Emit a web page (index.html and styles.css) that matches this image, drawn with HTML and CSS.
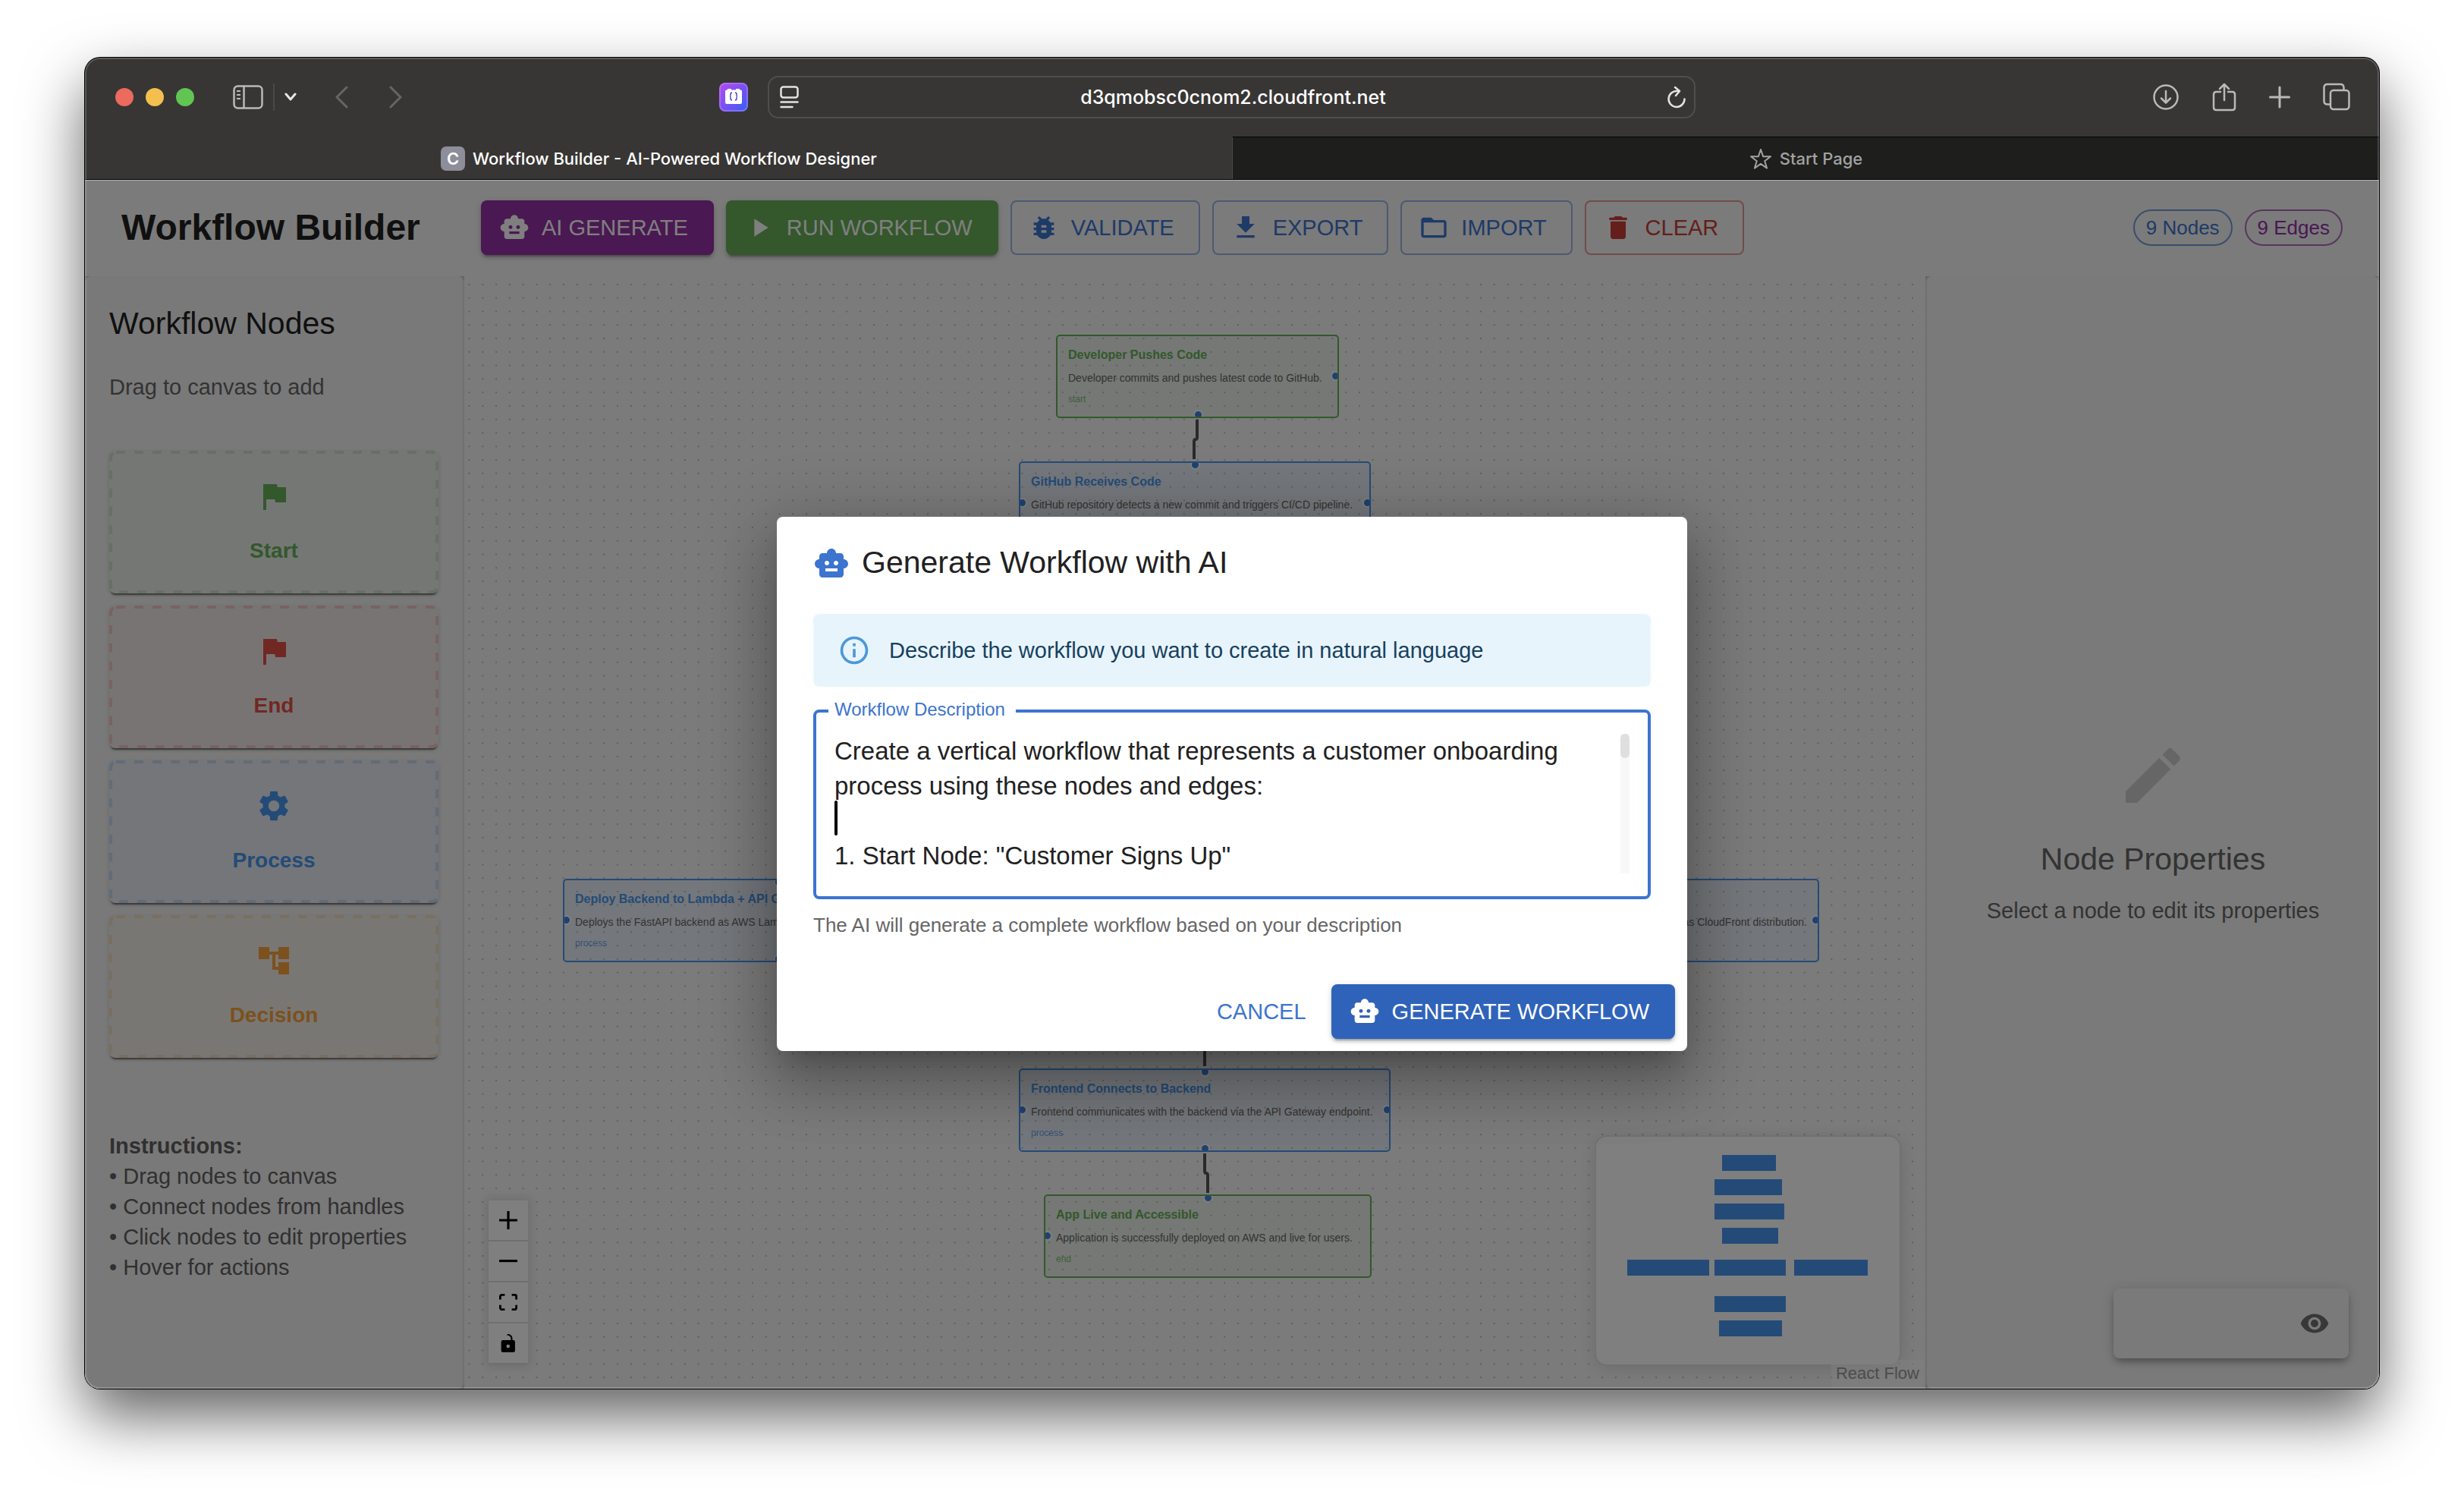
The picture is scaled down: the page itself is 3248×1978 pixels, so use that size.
FILE: index.html
```html
<!DOCTYPE html>
<html lang="en">
<head>
<meta charset="utf-8">
<title>Workflow Builder - AI-Powered Workflow Designer</title>
<link rel="stylesheet" href="styles.css">
</head>
<body>
<svg class="sprite" aria-hidden="true">
  <symbol id="i-robot" viewBox="0 0 24 24"><path d="M20 9V7c0-1.100-.9-2-2-2h-3c0-1.660-1.340-3-3-3S9 3.340 9 5H6c-1.100 0-2 .9-2 2v2c-1.660 0-3 1.340-3 3s1.340 3 3 3v4c0 1.100.9 2 2 2h12c1.100 0 2-.9 2-2v-4c1.660 0 3-1.340 3-3s-1.340-3-3-3zM7.500 11.500c0-.83.67-1.500 1.500-1.500s1.500.67 1.500 1.500S9.830 13 9 13s-1.500-.67-1.500-1.500zM16 17H8v-2h8v2zm-1-4c-.83 0-1.500-.67-1.500-1.500S14.170 10 15 10s1.500.67 1.500 1.500S15.830 13 15 13z"/></symbol>
  <symbol id="i-play" viewBox="0 0 24 24"><path d="M8 5v14l11-7z"/></symbol>
  <symbol id="i-bug" viewBox="0 0 24 24"><path d="M20 8h-2.810c-.45-.78-1.070-1.450-1.820-1.960L17 4.410 15.590 3l-2.170 2.170C12.960 5.060 12.490 5 12 5s-.96.06-1.410.17L8.410 3 7 4.410l1.620 1.630C7.880 6.550 7.260 7.220 6.810 8H4v2h2.090c-.05.33-.09.66-.09 1v1H4v2h2v1c0 .34.04.67.09 1H4v2h2.810c1.040 1.790 2.970 3 5.190 3s4.150-1.210 5.190-3H20v-2h-2.090c.05-.33.09-.66.09-1v-1h2v-2h-2v-1c0-.34-.04-.67-.09-1H20V8zm-6 8h-4v-2h4v2zm0-4h-4v-2h4v2z"/></symbol>
  <symbol id="i-export" viewBox="0 0 24 24"><path d="M19 9h-4V3H9v6H5l7 7 7-7zM5 18v2h14v-2H5z"/></symbol>
  <symbol id="i-folder" viewBox="0 0 24 24"><path d="M20 6h-8l-2-2H4c-1.100 0-1.990.9-1.990 2L2 18c0 1.100.9 2 2 2h16c1.100 0 2-.9 2-2V8c0-1.100-.9-2-2-2zm0 12H4V8h16v10z"/></symbol>
  <symbol id="i-trash" viewBox="0 0 24 24"><path d="M6 19c0 1.100.9 2 2 2h8c1.100 0 2-.9 2-2V7H6v12zM19 4h-3.500l-1-1h-5l-1 1H5v2h14V4z"/></symbol>
  <symbol id="i-flag" viewBox="0 0 24 24"><path d="M14.400 6 14 4H5v17h2v-7h5.600l.4 2h7V6z"/></symbol>
  <symbol id="i-gear" viewBox="0 0 24 24"><path d="M19.140 12.940c.04-.3.06-.61.06-.94 0-.32-.02-.64-.07-.94l2.030-1.580c.18-.14.23-.41.12-.61l-1.920-3.320c-.12-.22-.37-.29-.59-.22l-2.390.96c-.5-.38-1.030-.7-1.620-.94l-.36-2.540c-.04-.24-.24-.41-.48-.41h-3.840c-.24 0-.43.17-.47.41l-.36 2.540c-.59.24-1.130.57-1.620.94l-2.390-.96c-.22-.08-.47 0-.59.22L2.740 8.870c-.12.21-.08.47.12.61l2.030 1.580c-.05.3-.09.63-.09.94s.02.64.07.94l-2.030 1.580c-.18.14-.23.41-.12.61l1.920 3.320c.12.22.37.29.59.22l2.390-.96c.5.38 1.030.7 1.620.94l.36 2.540c.05.24.24.41.48.41h3.840c.24 0 .44-.17.47-.41l.36-2.540c.59-.24 1.130-.56 1.620-.94l2.390.96c.22.08.47 0 .59-.22l1.920-3.320c.12-.22.07-.47-.12-.61l-2.010-1.580zM12 15.600c-1.980 0-3.600-1.620-3.600-3.600s1.620-3.600 3.600-3.600 3.600 1.620 3.600 3.600-1.620 3.600-3.600 3.600z"/></symbol>
  <symbol id="i-tree" viewBox="0 0 24 24"><path d="M22 11V3h-7v3H9V3H2v8h7V8h2v10h4v3h7v-8h-7v3h-2V8h2v3z"/></symbol>
  <symbol id="i-edit" viewBox="0 0 24 24"><path d="M3 17.250V21h3.750L17.810 9.940l-3.750-3.750L3 17.250zM20.710 7.040c.39-.39.39-1.020 0-1.410l-2.340-2.340a.996.996 0 0 0-1.410 0l-1.830 1.830 3.750 3.750 1.830-1.830z"/></symbol>
  <symbol id="i-eye" viewBox="0 0 24 24"><path d="M12 4.500C7 4.500 2.730 7.610 1 12c1.730 4.390 6 7.500 11 7.500s9.270-3.110 11-7.500c-1.730-4.390-6-7.500-11-7.500zM12 17c-2.760 0-5-2.240-5-5s2.240-5 5-5 5 2.240 5 5-2.240 5-5 5zm0-8c-1.660 0-3 1.340-3 3s1.340 3 3 3 3-1.340 3-3-1.340-3-3-3z"/></symbol>
  <symbol id="i-info" viewBox="0 0 24 24"><path d="M11 9h2V7h-2v2zM12 20c-4.410 0-8-3.590-8-8s3.590-8 8-8 8 3.590 8 8-3.590 8-8 8zM12 2A10 10 0 0 0 2 12a10 10 0 0 0 10 10 10 10 0 0 0 10-10A10 10 0 0 0 12 2zM11 17h2v-6h-2v6z"/></symbol>
</svg>

<div class="window">
  <header class="chrome">
    <div class="lights"><span class="light red"></span><span class="light yellow"></span><span class="light green"></span></div>
    <div class="nav-left">
      <button class="bare" aria-label="Sidebar"><svg width="40" height="32" viewBox="0 0 40 32" fill="none" stroke="#bab9b8" stroke-width="2.500"><rect x="1.500" y="1.500" width="37" height="29" rx="5"/><path d="M14.500 2v28"/><path d="M5 8h5M5 13h5M5 18h5" stroke-width="2"/></svg></button>
      <span class="divider"></span>
      <button class="bare" aria-label="Tab groups"><svg width="16" height="12" viewBox="0 0 16 12" fill="none" stroke="#e6e6e5" stroke-width="3" stroke-linecap="round" stroke-linejoin="round"><path d="M2 2l6 7 6-7"/></svg></button>
    </div>
    <div class="history">
      <button class="bare" aria-label="Back"><svg width="18" height="30" viewBox="0 0 18 30" fill="none" stroke="#666563" stroke-width="3" stroke-linecap="round" stroke-linejoin="round"><path d="M16 2L3 15l13 13"/></svg></button>
      <button class="bare" aria-label="Forward"><svg width="18" height="30" viewBox="0 0 18 30" fill="none" stroke="#666563" stroke-width="3" stroke-linecap="round" stroke-linejoin="round"><path d="M2 2l13 13L2 28"/></svg></button>
    </div>
    <div class="address">
      <svg class="ext" width="38" height="38" viewBox="0 0 38 38"><defs><linearGradient id="ext" x1="0" y1="0" x2="1" y2="1"><stop offset="0" stop-color="#b44df0"/><stop offset=".5" stop-color="#7a4ff3"/><stop offset="1" stop-color="#2f63f6"/></linearGradient></defs><rect width="38" height="38" rx="8" fill="url(#ext)"/><rect x="1" y="1" width="36" height="36" rx="7" fill="none" stroke="#c58cf8" stroke-opacity=".6" stroke-width="1.500"/><path d="M8 11q0-1.500 1.500-1.500H11V8h5v1.500h6V8h5v1.500h1.500q1.500 0 1.500 1.500v15q0 2-2 2H10q-2 0-2-2V11z" fill="#fff"/><path d="M17 13q-2 0-2 2.500T14 18q1 0 1 2.500T17 23M21 13q2 0 2 2.500t1 2.500q-1 0-1 2.500T21 23" fill="none" stroke="#5347c9" stroke-width="1.500"/></svg>
      <div class="urlbar">
        <svg width="26" height="30" viewBox="0 0 26 30" fill="none" stroke="#e2e2e1" stroke-width="2.500" stroke-linecap="round"><rect x="1.500" y="1.500" width="22" height="14" rx="3"/><path d="M1.500 21.500h22M1.500 28h15"/></svg>
        <span class="url">d3qmobsc0cnom2.cloudfront.net</span>
        <svg width="26" height="30" viewBox="0 0 26 30" fill="none" stroke="#e2e2e1" stroke-width="2.500" stroke-linecap="round" stroke-linejoin="round"><path d="M14 7a10.500 10.500 0 1 0 9.500 10.500M11 2l6 5-5 6"/></svg>
      </div>
    </div>
    <div class="actions">
      <button class="bare" aria-label="Downloads"><svg width="36" height="38" viewBox="0 0 36 38" fill="none" stroke="#bab9b8" stroke-width="2.500" stroke-linecap="round" stroke-linejoin="round"><circle cx="18" cy="19" r="15.500"/><path d="M18 11v15M12 20.500l6 6 6-6"/></svg></button>
      <button class="bare" aria-label="Share"><svg width="32" height="38" viewBox="0 0 32 38" fill="none" stroke="#bab9b8" stroke-width="2.500" stroke-linecap="round" stroke-linejoin="round"><path d="M11 12H5.500Q2 12 2 15.500v17Q2 36 5.500 36h21q3.500 0 3.500-3.500v-17Q30 12 26.500 12H21M16 23V2M10 8l6-6 6 6"/></svg></button>
      <button class="bare" aria-label="New tab"><svg width="28" height="38" viewBox="0 0 28 38" fill="none" stroke="#bab9b8" stroke-width="3" stroke-linecap="round"><path d="M14 6v26M1.500 19h25"/></svg></button>
      <button class="bare" aria-label="Tab overview"><svg width="36" height="38" viewBox="0 0 36 38" fill="none" stroke="#bab9b8" stroke-width="2.500" stroke-linejoin="round"><rect x="10" y="10" width="24.500" height="25" rx="4"/><path d="M9 28.500H6q-4.500 0-4.500-4.500V6.500Q1.500 2 6 2h17q4.500 0 4.500 4.500V9"/></svg></button>
    </div>
  </header>
  <nav class="tabs">
    <a class="tab active" href="#"><span class="favicon">C</span>Workflow Builder - AI-Powered Workflow Designer</a>
    <a class="tab" href="#"><svg width="30" height="28" viewBox="0 0 30 28" fill="none" stroke="#a2a2a0" stroke-width="2" stroke-linejoin="round"><path d="M15 2l3.200 9.300h9.800l-7.800 5.900 2.900 9.400-8.100-5.700-8.100 5.700 2.900-9.400L2 11.300h9.800z"/></svg>Start Page</a>
  </nav>

  <div class="app">
    <header class="toolbar">
      <h1>Workflow Builder</h1>
      <div class="toolbar-buttons">
        <button class="btn purple"><svg><use href="#i-robot"/></svg>AI GENERATE</button>
        <button class="btn success"><svg><use href="#i-play"/></svg>RUN WORKFLOW</button>
        <button class="btn outlined"><svg><use href="#i-bug"/></svg>VALIDATE</button>
        <button class="btn outlined"><svg><use href="#i-export"/></svg>EXPORT</button>
        <button class="btn outlined"><svg><use href="#i-folder"/></svg>IMPORT</button>
        <button class="btn outlined danger"><svg><use href="#i-trash"/></svg>CLEAR</button>
      </div>
      <div class="chips"><span class="chip">9 Nodes</span><span class="chip edges">9 Edges</span></div>
    </header>

    <main class="main">
      <aside class="palette">
        <h2>Workflow Nodes</h2>
        <p class="hint">Drag to canvas to add</p>
        <div class="cards">
          <div class="card c-green"><svg class="dash"><rect/></svg><svg class="ico"><use href="#i-flag"/></svg><span>Start</span></div>
          <div class="card c-red"><svg class="dash"><rect/></svg><svg class="ico"><use href="#i-flag"/></svg><span>End</span></div>
          <div class="card c-blue"><svg class="dash"><rect/></svg><svg class="ico"><use href="#i-gear"/></svg><span>Process</span></div>
          <div class="card c-orange"><svg class="dash"><rect/></svg><svg class="ico"><use href="#i-tree"/></svg><span>Decision</span></div>
        </div>
        <div class="instructions">
          <strong>Instructions:</strong>
          <span>• Drag nodes to canvas</span>
          <span>• Connect nodes from handles</span>
          <span>• Click nodes to edit properties</span>
          <span>• Hover for actions</span>
        </div>
      </aside>

      <section class="canvas">
        <svg class="layer" aria-hidden="true">
          <defs><pattern id="dots" width="17.780" height="17.780" x="-2.400" y="2" patternUnits="userSpaceOnUse"><circle cx="8.900" cy="8.900" r=".75" fill="#666"/></pattern></defs>
          <rect width="100%" height="100%" fill="url(#dots)"/>
          <g fill="none" stroke="#555" stroke-width="4">
            <path d="M966 189v23q0 3-2 3t-2 3v23"/>
            <path d="M976 960v81"/>
            <path d="M976 1156v23q0 3 2 3t2 3v23"/>
          </g>
        </svg>
        <article class="node c-green" style="left:780px;top:77px;width:373px"><h3>Developer Pushes Code</h3><p>Developer commits and pushes latest code to GitHub.</p><small>start</small><i class="h bottom"></i><i class="h right"></i></article>
        <article class="node c-blue" style="left:731px;top:244px;width:464px"><h3>GitHub Receives Code</h3><p>GitHub repository detects a new commit and triggers CI/CD pipeline.</p><small>process</small><i class="h top"></i><i class="h left"></i><i class="h right"></i></article>
        <article class="node c-blue" style="left:130px;top:794px;width:567px"><h3>Deploy Backend to Lambda + API Gateway</h3><p>Deploys the FastAPI backend as AWS Lambda</p><small>process</small><i class="h top"></i><i class="h left"></i><i class="h bottom"></i></article>
        <article class="node c-blue end" style="left:1276px;top:794px;width:510px"><h3>&nbsp;</h3><p>as CloudFront distribution.</p><i class="h right"></i></article>
        <article class="node c-blue" style="left:731px;top:1044px;width:490px"><h3>Frontend Connects to Backend</h3><p>Frontend communicates with the backend via the API Gateway endpoint.</p><small>process</small><i class="h top"></i><i class="h left"></i><i class="h right"></i><i class="h bottom"></i></article>
        <article class="node c-green" style="left:764px;top:1210px;width:432px"><h3>App Live and Accessible</h3><p>Application is successfully deployed on AWS and live for users.</p><small>end</small><i class="h top"></i><i class="h left"></i></article>

        <div class="controls">
          <button aria-label="Zoom in"><svg viewBox="0 0 32 32"><path d="M32 18.133H18.133V32h-4.266V18.133H0v-4.266h13.867V0h4.266v13.867H32z"/></svg></button>
          <button aria-label="Zoom out"><svg viewBox="0 0 32 5"><path d="M0 0h32v4.200H0z"/></svg></button>
          <button aria-label="Fit view"><svg viewBox="0 0 32 30"><path d="M3.692 4.630c0-.53.4-.938.939-.938h5.215V0H4.708C2.130 0 0 2.054 0 4.630v5.216h3.692V4.631zM27.354 0h-5.200v3.692h5.170c.53 0 .984.4.984.939v5.215H32V4.631A4.624 4.624 0 0027.354 0zm.954 24.830c0 .532-.4.94-.939.94h-5.215v3.768h5.215c2.577 0 4.631-2.130 4.631-4.707v-5.139h-3.692v5.139zm-23.677.94c-.531 0-.939-.4-.939-.94v-5.138H0v5.139c0 2.577 2.130 4.707 4.708 4.707h5.138V25.770H4.631z"/></svg></button>
          <button aria-label="Toggle interactivity"><svg viewBox="0 0 25 32"><path d="M21.333 10.667H19.810V7.619C19.810 3.429 16.380 0 12.190 0c-4.114 1.828-1.370 2.133.305 2.438 1.676.305 4.420 2.590 4.420 5.181v3.048H3.047A3.056 3.056 0 000 13.714v15.238A3.056 3.056 0 003.048 32h18.285a3.056 3.056 0 003.048-3.048V13.714a3.056 3.056 0 00-3.048-3.047zM12.190 24.533a3.056 3.056 0 01-3.047-3.047 3.056 3.056 0 013.047-3.048 3.056 3.056 0 013.048 3.048 3.056 3.056 0 01-3.048 3.047z"/></svg></button>
        </div>
        <svg class="minimap" viewBox="0 0 400 300" role="img" aria-label="Mini map">
          <rect x="166" y="24" width="71" height="21"/><rect x="156" y="56" width="89" height="21"/><rect x="156" y="88" width="92" height="21"/><rect x="166" y="120" width="74" height="21"/>
          <rect x="41" y="162" width="108" height="21"/><rect x="156" y="162" width="94" height="21"/><rect x="261" y="162" width="97" height="21"/>
          <rect x="156" y="210" width="94" height="21"/><rect x="162" y="242" width="83" height="21"/>
        </svg>
        <a class="attribution" href="#">React Flow</a>
      </section>

      <aside class="props">
        <svg><use href="#i-edit"/></svg>
        <h2>Node Properties</h2>
        <p>Select a node to edit its properties</p>
        <div class="float"><button class="bare" aria-label="Show panel"><svg><use href="#i-eye"/></svg></button></div>
      </aside>
    </main>

    <div class="backdrop">
      <form class="dialog" role="dialog" aria-labelledby="dlg-title">
        <h2 id="dlg-title"><svg><use href="#i-robot"/></svg>Generate Workflow with AI</h2>
        <div class="alert"><svg><use href="#i-info"/></svg>Describe the workflow you want to create in natural language</div>
        <div class="field">
          <label for="desc">Workflow Description</label>
          <textarea id="desc" rows="4">Create a vertical workflow that represents a customer onboarding
process using these nodes and edges:

1. Start Node: "Customer Signs Up"</textarea>
          <span class="scroll"><span></span></span>
          <span class="caret"></span>
        </div>
        <p class="helper">The AI will generate a complete workflow based on your description</p>
        <div class="dialog-actions">
          <button type="button" class="btn text">CANCEL</button>
          <button type="button" class="btn primary"><svg><use href="#i-robot"/></svg>GENERATE WORKFLOW</button>
        </div>
      </form>
    </div>
  </div>
</div>
</body>
</html>
```
FILE: styles.css
```css
* { box-sizing: border-box; }
body {
  margin: 0;
  min-height: 100vh;
  padding: 76px 112px 148px;
  display: flex;
  background: #fff;
  font-family: "Liberation Sans", Arial, sans-serif;
  overflow: hidden;
}
h1, h2, h3, p { margin: 0; }
button { font: inherit; cursor: pointer; }
svg { display: block; flex: none; }
.sprite { position: absolute; width: 0; height: 0; }

/* browser window */
.window {
  flex: 1;
  min-width: 0;
  display: flex;
  flex-direction: column;
  position: relative;
  border-radius: 20px;
  overflow: hidden;
  background: #383634;
  box-shadow: 0 0 0 1px #000, 0 36px 80px rgba(0, 0, 0, .62);
}
.window::after {
  content: "";
  position: absolute;
  inset: 0;
  border: 2px solid rgba(255, 255, 255, .18);
  border-radius: 20px;
  pointer-events: none;
}
.bare { background: none; border: 0; padding: 0; display: block; }
.chrome {
  height: 104px;
  display: grid;
  grid-template-columns: auto auto auto 1fr auto;
  align-items: center;
  padding: 0 38px 0 40px;
  font-family: Inter, sans-serif;
}
.lights { display: flex; gap: 16px; }
.light { width: 24px; height: 24px; border-radius: 50%; }
.red { background: #ed6a5e; }
.yellow { background: #f5bf4f; }
.green { background: #61c554; }
.nav-left { display: flex; align-items: center; gap: 13px; margin-left: 51px; }
.divider { width: 2px; height: 36px; background: #4a4947; }
.history { display: flex; gap: 54px; margin-left: 50px; }
.address { display: flex; align-items: center; gap: 26px; margin: 0 602px 0 417px; }
.urlbar {
  flex: 1;
  height: 56px;
  display: flex;
  align-items: center;
  justify-content: space-between;
  padding: 0 10px 0 14px;
  border: 2px solid #4f4e4c;
  border-radius: 14px;
}
.url { color: #fff; font-size: 25px; font-weight: 500; line-height: 32px; }
.actions { display: flex; align-items: center; gap: 43px; }
.tabs { display: flex; height: 57px; border-bottom: 1px solid #000; }
.tab {
  flex: 1;
  display: flex;
  align-items: center;
  justify-content: center;
  gap: 10px;
  background: #1e1e1c;
  border-top: 1px solid #000;
  border-left: 1px solid #4a4947;
  color: #a2a2a0;
  font: 500 22px/28px Inter, sans-serif;
  text-decoration: none;
}
.tab.active { background: none; border-color: transparent; color: #fff; }
.favicon {
  width: 32px;
  height: 32px;
  border-radius: 7px;
  background: #8e8e9a;
  font-weight: 600;
  text-align: center;
  line-height: 32px;
}

/* application */
.app { flex: 1; display: flex; flex-direction: column; position: relative; color: #212121; border-top: 1px solid #b4b4b4; }
.toolbar { height: 126px; display: flex; align-items: center; padding: 0 48px 2px; background: #f6f6f6; }
.toolbar h1 { font-size: 48px; line-height: 64px; min-width: 394px; margin-right: 80px; }
.toolbar-buttons { display: flex; gap: 16px; }
.btn {
  height: 72px;
  display: flex;
  align-items: center;
  gap: 16px;
  padding: 0 34px 0 24px;
  border: 0;
  border-radius: 8px;
  color: #fff;
  fill: currentColor;
  font-size: 29px;
  line-height: 48px;
}
.btn svg { width: 40px; height: 40px; }
.purple, .success, .primary { box-shadow: 0 6px 2px -4px rgba(0, 0, 0, .2), 0 4px 4px rgba(0, 0, 0, .14), 0 2px 10px rgba(0, 0, 0, .12); }
.purple { background: #9430a4; }
.success { background: #68ae58; }
.outlined { padding: 0 32px 0 22px; background: none; border: 2px solid rgba(60, 116, 207, .5); color: #3c74cf; }
.danger { border-color: rgba(201, 63, 56, .5); color: #c93f38; }
.chips { display: flex; gap: 16px; margin-left: auto; }
.chip {
  height: 48px;
  padding: 0 15px;
  border: 2px solid rgba(60, 116, 207, .7);
  border-radius: 24px;
  color: #3c74cf;
  font-size: 26px;
  line-height: 44px;
}
.chip.edges { border-color: rgba(148, 48, 164, .7); color: #9430a4; }

.main { flex: 1; display: grid; grid-template-columns: 500px minmax(0, 1fr) 598px; background: #c8c8c8; }
.palette { padding: 30px 32px 0; border-right: 2px solid #e0e0e0; border-radius: 8px; background: #f3f3f3; }
h2 { font-size: 41px; font-weight: 400; line-height: 64px; }
.hint { margin: 32px 0 64px; color: #666; font-size: 29px; line-height: 40px; }
.cards { display: flex; flex-direction: column; gap: 16px; }
.card {
  height: 188px;
  padding: 36px;
  position: relative;
  display: flex;
  flex-direction: column;
  align-items: center;
  justify-content: space-between;
  border-radius: 8px;
  background: color-mix(in srgb, currentColor 6%, #f3f3f3);
  font-size: 28px;
  font-weight: 700;
  line-height: 40px;
  box-shadow: 0 4px 2px -2px rgba(0, 0, 0, .5), 0 2px 6px rgba(0, 0, 0, .15);
}
.ico { width: 48px; height: 48px; fill: currentColor; }
.dash { position: absolute; inset: 0; width: 100%; height: 100%; opacity: .22; }
.dash rect {
  x: 2px;
  y: 2px;
  width: calc(100% - 4px);
  height: calc(100% - 4px);
  rx: 7px;
  fill: none;
  stroke: currentColor;
  stroke-width: 4;
  stroke-dasharray: 12;
}
.c-green { color: #66b058; }
.c-red { color: #e25046; }
.c-blue { color: #4896ee; }
.c-orange { color: #f8a23a; }
.instructions { margin-top: 96px; display: flex; flex-direction: column; color: #606060; font-size: 29px; line-height: 40px; }

.canvas { position: relative; background: #f7f7f7; overflow: hidden; }
.layer { position: absolute; inset: 0; width: 100%; height: 100%; }
.node {
  position: absolute;
  height: 110px;
  padding: 13px 14px;
  display: flex;
  flex-direction: column;
  gap: 8px;
  border: 2px solid currentColor;
  border-radius: 5px;
  background: color-mix(in srgb, currentColor 8%, transparent);
  overflow: hidden;
  white-space: nowrap;
}
.node.end { align-items: flex-end; }
.node h3 { font-size: 16px; line-height: 24px; }
.node p { color: #666; font-size: 14px; line-height: 20px; }
.node small { font-size: 12px; line-height: 20px; opacity: .8; }
.h { position: absolute; width: 13px; height: 13px; border: 2px solid #fff; border-radius: 50%; background: #4083e0; }
.h.top, .h.bottom { left: calc(50% - 6px); }
.h.left, .h.right { top: 46px; }
.h.top { top: -4px; }
.h.bottom { bottom: -4px; }
.h.left { left: -4px; }
.h.right { right: -4px; }

.controls { position: absolute; left: 32px; bottom: 32px; display: flex; flex-direction: column; box-shadow: 0 0 12px 4px rgba(0, 0, 0, .1); }
.controls button {
  width: 52px;
  height: 54px;
  padding: 0;
  display: grid;
  place-items: center;
  background: #fefefe;
  border: 0;
  border-bottom: 2px solid #dedede;
}
.controls svg { width: 24px; max-height: 24px; }
.minimap {
  position: absolute;
  right: 32px;
  bottom: 30px;
  width: 404px;
  height: 304px;
  border: 2px solid #e2e2e2;
  border-radius: 16px;
  background: #fff;
  fill: #4896ee;
  box-shadow: 0 4px 24px rgba(0, 0, 0, .12);
}
.attribution {
  position: absolute;
  right: 2px;
  bottom: 0;
  padding: 4px 6px 6px;
  background: rgba(255, 255, 255, .5);
  color: #999;
  font-size: 22px;
  line-height: 28px;
  text-decoration: none;
}

.props {
  position: relative;
  display: flex;
  flex-direction: column;
  align-items: center;
  justify-content: center;
  border-left: 2px solid #e0e0e0;
  border-radius: 8px;
  background: #f5f5f5;
  color: #666;
}
.props > svg { width: 96px; height: 96px; margin-bottom: 30px; fill: #ccc; }
.props p { margin-top: 16px; font-size: 29px; line-height: 40px; }
.float {
  position: absolute;
  right: 40px;
  bottom: 40px;
  width: 310px;
  height: 92px;
  padding: 0 25px;
  display: flex;
  align-items: center;
  justify-content: flex-end;
  border-radius: 8px;
  background: #f5f5f5;
  box-shadow: 0 6px 10px -2px rgba(0, 0, 0, .3), 0 2px 20px rgba(0, 0, 0, .14);
}
.float svg { width: 40px; height: 40px; fill: #707070; }

/* dialog */
.backdrop { position: absolute; inset: 0; display: grid; place-items: center; padding-bottom: 2px; background: rgba(0, 0, 0, .5); }
.dialog {
  width: 1200px;
  padding: 28px 16px 16px;
  display: flex;
  flex-direction: column;
  border-radius: 8px;
  background: #fff;
  box-shadow: 0 22px 30px -14px rgba(0, 0, 0, .2), 0 48px 76px 6px rgba(0, 0, 0, .14), 0 18px 92px 16px rgba(0, 0, 0, .2);
}
.dialog h2 { display: flex; align-items: center; gap: 16px; margin: 0 32px 36px; }
.dialog h2 svg { width: 48px; height: 48px; margin-top: 4px; fill: #3c74cf; }
.alert {
  height: 96px;
  margin: 0 32px 30px;
  padding: 0 32px;
  display: flex;
  align-items: center;
  gap: 24px;
  border-radius: 8px;
  background: #e8f4fc;
  color: #17415e;
  font-size: 29px;
  line-height: 40px;
}
.alert svg { width: 44px; height: 44px; fill: #4c98da; }
.field {
  position: relative;
  height: 250px;
  margin: 0 32px;
  padding: 28px 24px;
  border: 4px solid #3c74cf;
  border-radius: 8px;
  display: flex;
  justify-content: space-between;
}
.field label {
  position: absolute;
  left: 16px;
  top: -18px;
  padding: 0 14px 0 8px;
  background: #fff;
  color: #3c74cf;
  font-size: 24px;
  line-height: 28px;
}
.field textarea {
  flex: 1;
  height: 184px;
  padding: 0;
  border: 0;
  outline: 0;
  resize: none;
  overflow: hidden;
  background: none;
  color: #212121;
  font: 33px/46px "Liberation Sans", Arial, sans-serif;
}
.scroll { width: 12px; height: 184px; background: #f8f8f9; }
.scroll span { display: block; height: 32px; border-radius: 6px; background: #dfdfdf; }
.caret { position: absolute; left: 24px; top: 116px; width: 4px; height: 46px; border-radius: 2px; background: #000; }
.helper { margin: 14px 32px 0; color: #666; font-size: 26px; line-height: 40px; }
.dialog-actions { display: flex; justify-content: flex-end; gap: 16px; margin-top: 58px; }
.text { padding: 0 17px; background: none; color: #3c74cf; }
.primary { background: #2f63ba; }
```
